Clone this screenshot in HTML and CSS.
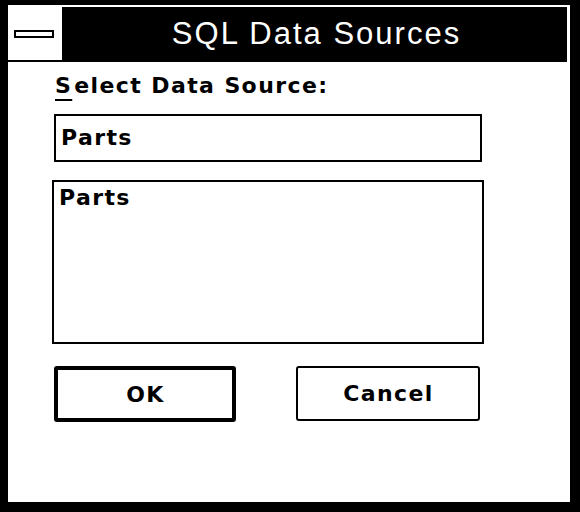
FILE: index.html
```html
<!DOCTYPE html>
<html>
<head>
<meta charset="utf-8">
<link rel="stylesheet" href="styles.css">
</head>
<body>
<div class="window">
  <div class="titlebar">
    <div class="sysmenu"><div class="dash"></div></div>
    <div class="title">SQL Data Sources</div>
  </div>
  <div class="client">
    <div class="label"><span class="mn">S</span>elect Data Source:</div>
    <div class="edit">Parts</div>
    <div class="list"><div class="item">Parts</div></div>
    <div class="buttons">
      <div class="btn btn-default">OK</div>
      <div class="btn btn-cancel">Cancel</div>
    </div>
  </div>
</div>
</body>
</html>
```

FILE: styles.css
```css
html, body {
  margin: 0;
  padding: 0;
  background: #000;
}
body {
  width: 580px;
  height: 512px;
  overflow: hidden;
  font-family: "Liberation Sans", Arial, sans-serif;
}
.window {
  margin: 5px 0 0 8px;
  width: 562px;
  height: 497px;
  background: #fff;
  display: flex;
  flex-direction: column;
}
.titlebar {
  margin: 2px 3px 0 0;
  height: 55px;
  box-sizing: border-box;
  border-bottom: 2px solid #000;
  display: flex;
}
.sysmenu {
  width: 54px;
  background: #fff;
  display: flex;
  align-items: center;
}
.dash {
  margin: 1px 0 0 6px;
  width: 40px;
  height: 8px;
  box-sizing: border-box;
  border: 2px solid #000;
  background: #fff;
}
.title {
  flex: 1;
  background: #000;
  color: #fff;
  font-size: 31px;
  letter-spacing: 2px;
  display: flex;
  align-items: center;
  justify-content: center;
  padding-left: 4px;
}
.client {
  flex: 1;
  font-family: "DejaVu Sans", "Liberation Sans", sans-serif;
  font-size: 22px;
  font-weight: bold;
  letter-spacing: 1.4px;
  color: #000;
}
.label {
  margin: 11px 0 0 47px;
  line-height: 26px;
}
.mn {
  text-decoration: underline;
  text-decoration-thickness: 2px;
  text-underline-offset: 6px;
  padding-right: 2px;
}
.edit {
  margin: 15px 0 0 46px;
  width: 428px;
  height: 48px;
  box-sizing: border-box;
  border: 2px solid #000;
  line-height: 44px;
  padding-left: 5px;
}
.list {
  margin: 18px 0 0 44px;
  width: 432px;
  height: 164px;
  box-sizing: border-box;
  border: 2px solid #000;
  padding: 3px 0 0 5px;
}
.item {
  line-height: 26px;
}
.buttons {
  margin: 22px 0 0 46px;
  display: flex;
  gap: 60px;
}
.btn {
  height: 56px;
  box-sizing: border-box;
  border: 2px solid #000;
  border-radius: 3px;
  display: flex;
  align-items: center;
  justify-content: center;
  padding-left: 1px;
}
.btn-default {
  width: 182px;
  border-width: 4px;
}
.btn-cancel {
  width: 184px;
  height: 55px;
}
```
